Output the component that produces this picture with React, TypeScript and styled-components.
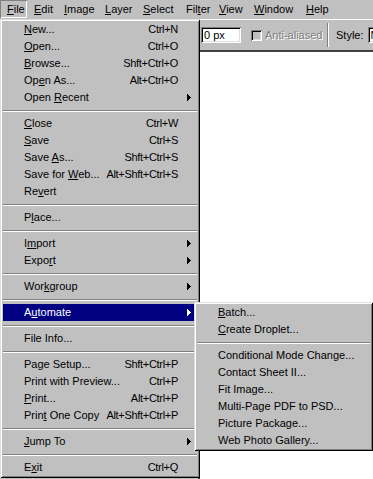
import React from 'react'
import styled, { createGlobalStyle, css } from 'styled-components'

const GlobalStyle = createGlobalStyle`
  html, body {
    margin: 0;
    padding: 0;
    background: #c0c0c0;
  }
  body {
    font-family: "Liberation Sans", Arial, sans-serif;
    font-size: 11px;
    color: #000;
    overflow: hidden;
  }
`

const raised = css`
  box-shadow: inset 1px 1px #dfdfdf, inset -1px -1px #000, inset 2px 2px #fff,
    inset -2px -2px #808080;
`

const sunken = css`
  box-shadow: inset 1px 1px #808080, inset -1px -1px #fff, inset 2px 2px #000,
    inset -2px -2px #dfdfdf;
`

const Screen = styled.div`
  position: relative;
  width: 373px;
  height: 479px;
  display: flex;
  flex-direction: column;
  background: #c0c0c0;
  overflow: hidden;
`

const MenuBar = styled.div`
  display: flex;
  height: 19px;
  flex: none;
`

const BarItem = styled.div<{ $w: number; $pressed?: boolean }>`
  box-sizing: border-box;
  flex: none;
  width: ${(p) => p.$w}px;
  height: 18px;
  padding-left: 7px;
  line-height: 18px;
  white-space: nowrap;
  ${(p) =>
    p.$pressed &&
    css`
      box-shadow: inset 1px 1px #808080, inset -1px -1px #fff;
    `}
`

const Workspace = styled.div`
  flex: 1;
  display: flex;
`

const PaletteWell = styled.div`
  flex: none;
  width: 198px;
`

const DocArea = styled.div`
  flex: 1;
  display: flex;
  flex-direction: column;
  border-left: 2px solid #404040;
`

const OptionsBar = styled.div`
  flex: none;
  height: 33px;
  box-sizing: border-box;
  border-top: 1px solid #fff;
  border-bottom: 2px solid #404040;
  display: flex;
  align-items: center;
  white-space: nowrap;
`

const Field = styled.div<{ $w: number; $first?: boolean }>`
  flex: none;
  box-sizing: border-box;
  width: ${(p) => p.$w}px;
  height: 16px;
  margin-left: ${(p) => (p.$first ? 1 : 0)}px;
  padding: 0 3px;
  line-height: 16px;
  background: #fff;
  overflow: hidden;
  ${sunken}
`

const CheckBox = styled.div`
  flex: none;
  width: 11px;
  height: 11px;
  margin-left: 10px;
  background: #c0c0c0;
  ${sunken}
`

const DisabledLabel = styled.span`
  flex: none;
  width: 59px;
  margin-left: 3px;
  color: #808080;
  text-shadow: 1px 1px #fff;
  overflow: hidden;
`

const Etch = styled.div`
  flex: none;
  width: 1px;
  height: 24px;
  margin-left: 3px;
  background: #808080;
  border-right: 1px solid #fff;
`

const Label = styled.span`
  flex: none;
  margin-left: 7px;
  margin-right: 4px;
`

const Canvas = styled.div`
  flex: 1;
  background: #fff;
`

const Dropdown = styled.div`
  position: absolute;
  left: 0;
  top: 19px;
  width: 200px;
  box-sizing: border-box;
  padding: 2px 3px;
  background: #c0c0c0;
  ${raised}
`

const SubMenu = styled.div`
  position: absolute;
  left: calc(100% - 3px);
  top: -2px;
  width: 179px;
  box-sizing: border-box;
  padding: 2px 3px;
  background: #c0c0c0;
  color: #000;
  ${raised}
`

const Row = styled.div<{ $active?: boolean }>`
  position: relative;
  display: flex;
  align-items: center;
  height: 17px;
  line-height: 17px;
  padding-left: 21px;
  white-space: nowrap;
  ${(p) =>
    p.$active &&
    css`
      background: #000080;
      color: #fff;
    `}
`

const ItemText = styled.span`
  flex: 1;
`

const Shortcut = styled.span`
  flex: none;
  letter-spacing: -0.3px;
`

const ArrowCell = styled.span`
  flex: none;
  width: 19px;
  display: flex;
  align-items: center;
  padding-left: 9px;
  box-sizing: border-box;
`

const Separator = styled.div`
  height: 9px;
  display: flex;
  align-items: center;
  &::after {
    content: '';
    flex: 1;
    height: 1px;
    background: #808080;
    border-bottom: 1px solid #fff;
  }
`

const Arrow = () => (
  <svg width="4" height="7" viewBox="0 0 4 7" shapeRendering="crispEdges">
    <path d="M0 0h1v7h-1z M1 1h1v5h-1z M2 2h1v3h-1z M3 3h1v1h-1z" fill="currentColor" />
  </svg>
)

// label with one underlined mnemonic letter, written as "Op&en As..."
const Mn = ({ t }: { t: string }) => {
  const i = t.indexOf('&')
  if (i < 0) return <>{t}</>
  return (
    <>
      {t.slice(0, i)}
      <u>{t[i + 1]}</u>
      {t.slice(i + 2)}
    </>
  )
}

type Entry = { label?: string; key?: string; sub?: boolean; sep?: boolean }

const fileMenu: Entry[] = [
  { label: '&New...', key: 'Ctrl+N' },
  { label: '&Open...', key: 'Ctrl+O' },
  { label: '&Browse...', key: 'Shft+Ctrl+O' },
  { label: 'Op&en As...', key: 'Alt+Ctrl+O' },
  { label: 'Open &Recent', sub: true },
  { sep: true },
  { label: '&Close', key: 'Ctrl+W' },
  { label: '&Save', key: 'Ctrl+S' },
  { label: 'Save &As...', key: 'Shft+Ctrl+S' },
  { label: 'Save for &Web...', key: 'Alt+Shft+Ctrl+S' },
  { label: 'Re&vert' },
  { sep: true },
  { label: 'P&lace...' },
  { sep: true },
  { label: 'I&mport', sub: true },
  { label: 'Expo&rt', sub: true },
  { sep: true },
  { label: 'Wor&kgroup', sub: true },
  { sep: true },
  { label: 'A&utomate', sub: true },
  { sep: true },
  { label: 'File Info...' },
  { sep: true },
  { label: 'Page Setup...', key: 'Shft+Ctrl+P' },
  { label: 'Print with Preview...', key: 'Ctrl+P' },
  { label: '&Print...', key: 'Alt+Ctrl+P' },
  { label: 'Prin&t One Copy', key: 'Alt+Shft+Ctrl+P' },
  { sep: true },
  { label: '&Jump To', sub: true },
  { sep: true },
  { label: 'E&xit', key: 'Ctrl+Q' },
]

const automateMenu: Entry[] = [
  { label: '&Batch...' },
  { label: '&Create Droplet...' },
  { sep: true },
  { label: 'Conditional Mode Change...' },
  { label: 'Contact Sheet II...' },
  { label: 'Fit Image...' },
  { label: 'Multi-Page PDF to PSD...' },
  { label: 'Picture Package...' },
  { label: 'Web Photo Gallery...' },
]

const menuBar = [
  { label: '&File', w: 27 },
  { label: '&Edit', w: 30 },
  { label: '&Image', w: 41 },
  { label: '&Layer', w: 38 },
  { label: '&Select', w: 43 },
  { label: 'Fil&ter', w: 33 },
  { label: '&View', w: 35 },
  { label: '&Window', w: 52 },
  { label: '&Help', w: 40 },
]

const MenuRows = ({ items, open }: { items: Entry[]; open?: string }) => (
  <>
    {items.map((e, i) => {
      if (e.sep) return <Separator key={i} />
      const active = e.label === open
      return (
        <Row key={i} $active={active}>
          <ItemText>
            <Mn t={e.label!} />
          </ItemText>
          {e.key && <Shortcut>{e.key}</Shortcut>}
          {(e.key || e.sub) && <ArrowCell>{e.sub && <Arrow />}</ArrowCell>}
          {active && (
            <SubMenu>
              <MenuRows items={automateMenu} />
            </SubMenu>
          )}
        </Row>
      )
    })}
  </>
)

const App = () => {
  return (
    <>
      <GlobalStyle />
      <Screen>
        <MenuBar>
          {menuBar.map((m, i) => (
            <BarItem key={m.label} $w={m.w} $pressed={i === 0}>
              <Mn t={m.label} />
            </BarItem>
          ))}
        </MenuBar>
        <Workspace>
          <PaletteWell />
          <DocArea>
            <OptionsBar>
              <Field $w={40} $first>
                0 px
              </Field>
              <CheckBox />
              <DisabledLabel>Anti-aliased</DisabledLabel>
              <Etch />
              <Label>Style:</Label>
              <Field $w={60}>Normal</Field>
            </OptionsBar>
            <Canvas />
          </DocArea>
        </Workspace>
        <Dropdown>
          <MenuRows items={fileMenu} open="A&utomate" />
        </Dropdown>
      </Screen>
    </>
  )
}

export default App
